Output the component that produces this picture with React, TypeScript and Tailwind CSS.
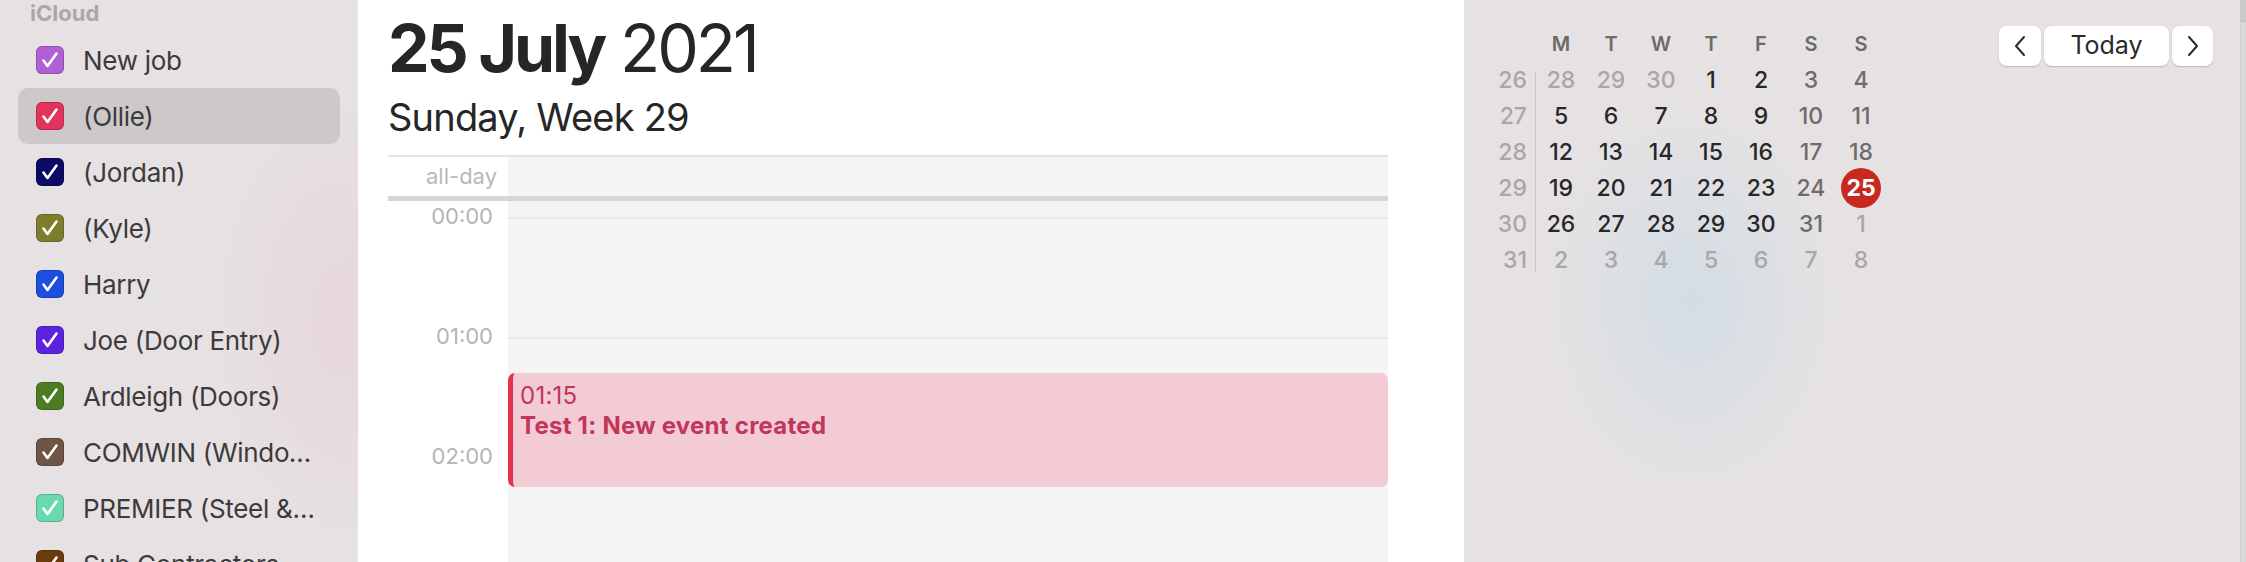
import React from 'react';

type CalendarItem = {
    name: string;
    color: string;
    selected?: boolean;
};

const calendars: CalendarItem[] = [
    { name: 'New job', color: '#b15fd5' },
    { name: '(Ollie)', color: '#e0345a', selected: true },
    { name: '(Jordan)', color: '#0c0b63' },
    { name: '(Kyle)', color: '#7e7c2d' },
    { name: 'Harry', color: '#1c4ee0' },
    { name: 'Joe (Door Entry)', color: '#5b22e0' },
    { name: 'Ardleigh (Doors)', color: '#4b7c22' },
    { name: 'COMWIN (Windows)', color: '#6e5546' },
    { name: 'PREMIER (Steel &Glass)', color: '#6ad9ad' },
    { name: 'Sub Contractors', color: '#6b3a0d' },
];

// kind: 'o' other month, 'd' weekday, 'w' weekend, 't' today
type Day = [number, 'o' | 'd' | 'w' | 't'];

const weeks: { num: number; days: Day[] }[] = [
    { num: 26, days: [[28, 'o'], [29, 'o'], [30, 'o'], [1, 'd'], [2, 'd'], [3, 'w'], [4, 'w']] },
    { num: 27, days: [[5, 'd'], [6, 'd'], [7, 'd'], [8, 'd'], [9, 'd'], [10, 'w'], [11, 'w']] },
    { num: 28, days: [[12, 'd'], [13, 'd'], [14, 'd'], [15, 'd'], [16, 'd'], [17, 'w'], [18, 'w']] },
    { num: 29, days: [[19, 'd'], [20, 'd'], [21, 'd'], [22, 'd'], [23, 'd'], [24, 'w'], [25, 't']] },
    { num: 30, days: [[26, 'd'], [27, 'd'], [28, 'd'], [29, 'd'], [30, 'd'], [31, 'w'], [1, 'o']] },
    { num: 31, days: [[2, 'o'], [3, 'o'], [4, 'o'], [5, 'o'], [6, 'o'], [7, 'o'], [8, 'o']] },
];

const dayColor: Record<Day[1], string> = {
    o: 'text-[#a9a6a7]',
    d: 'text-[#272727]',
    w: 'text-[#6e6b6c]',
    t: 'text-white',
};

const CheckBox: React.FC<{ color: string }> = ({ color }) => (
    <span
        className="w-[28px] h-[28px] rounded-[6px] shrink-0 flex items-center justify-center shadow-[inset_0_0_0_1px_rgba(0,0,0,0.18)]"
        style={{ backgroundColor: color }}
    >
        <svg width="28" height="28" viewBox="0 0 28 28" fill="none">
            <path d="M7.5 14.5 L11.5 20 L20.5 7.5" stroke="white" strokeWidth="2.6" strokeLinecap="round" strokeLinejoin="round" />
        </svg>
    </span>
);

const Sidebar: React.FC = () => (
    <aside className="w-[358px] shrink-0 h-full overflow-hidden bg-[#e6e1e3] bg-[radial-gradient(ellipse_130px_220px_at_345px_320px,#e6d6dd,transparent)]">
        <div className="h-[32px] pl-[30px] pt-[2px] text-[22px] leading-[22px] font-bold text-[#aaa7a8]">iCloud</div>
        <ul>
            {calendars.map((c) => (
                <li
                    key={c.name}
                    className={`mx-[18px] h-[56px] rounded-[10px] flex items-center pl-[18px] pr-[18px] gap-[19px] ${c.selected ? 'bg-[#cdc9ca]' : ''}`}
                >
                    <CheckBox color={c.color} />
                    <span className="truncate text-[26px] tracking-[-0.3px] text-[#3c3a3b]">{c.name}</span>
                </li>
            ))}
        </ul>
    </aside>
);

const hours = ['00:00', '01:00', '02:00'];

const DayView: React.FC = () => (
    <main className="w-[1106px] shrink-0 h-full bg-white pl-[30px] flex flex-col text-[#262626]">
        <h1 className="pt-[15px] text-[66px] leading-[66px] tracking-[-3px]">
            <span className="font-bold">25 July</span> <span className="font-normal">2021</span>
        </h1>
        <h2 className="mt-[17px] text-[38px] leading-[38px] tracking-[-0.8px] font-normal">Sunday, Week 29</h2>

        <div className="mt-[19px] w-[1000px] flex-1 flex flex-col border-t-2 border-[#e4e4e4]">
            <div className="h-[39px] flex">
                <div className="w-[120px] pr-[11px] flex items-center justify-end text-[22px] text-[#b8b8b8]">all-day</div>
                <div className="flex-1 bg-[#f4f4f4]" />
            </div>
            <div className="h-[5px] bg-[#d6d6d6]" />
            <div className="flex-1 flex">
                <div className="w-[120px] pt-[4px]">
                    {hours.map((h) => (
                        <div key={h} className="h-[120px] pr-[15px] text-right text-[22px] leading-[22px] text-[#b5b5b5]">
                            {h}
                        </div>
                    ))}
                </div>
                <div className="flex-1 relative bg-[#f4f4f4] pt-[16px]">
                    {hours.map((h) => (
                        <div key={h} className="h-[120px] border-t-2 border-[#e9e9e9]" />
                    ))}
                    <div className="absolute left-0 right-0 top-[172px] h-[114px] rounded-[7px] border-l-[5px] border-[#e2334f] bg-[#f2c8d3]/95 pl-[7px] pt-[8px] text-[24px] leading-[30px] tracking-[0.25px] text-[#c1365a]">
                        <div>01:15</div>
                        <div className="font-bold">Test 1: New event created</div>
                    </div>
                </div>
            </div>
        </div>
    </main>
);

const Chevron: React.FC<{ dir: 'left' | 'right' }> = ({ dir }) => (
    <svg width="16" height="24" viewBox="0 0 16 24" fill="none">
        <path
            d={dir === 'left' ? 'M12 3 L4 12 L12 21' : 'M4 3 L12 12 L4 21'}
            stroke="#2b2b2b"
            strokeWidth="2"
            strokeLinecap="round"
            strokeLinejoin="round"
        />
    </svg>
);

const MiniCalendar: React.FC = () => (
    <div className="pt-[26px] pl-[23px]">
        <div className="flex h-[36px] items-center">
            <div className="w-[49px]" />
            <div className="grid grid-cols-7 w-[350px] text-center text-[20px] font-semibold text-[#6d6a6b]">
                {['M', 'T', 'W', 'T', 'F', 'S', 'S'].map((d, i) => (
                    <span key={i}>{d}</span>
                ))}
            </div>
        </div>
        <div className="flex">
            <div className="w-[48px] flex flex-col">
                {weeks.map((w) => (
                    <div key={w.num} className="h-[36px] pr-[8px] flex items-center justify-end text-[23px] font-medium text-[#a9a6a7]">
                        {w.num}
                    </div>
                ))}
            </div>
            <div className="w-px bg-[#c9c6c7] mt-[10px] mb-[6px]" />
            <div className="grid grid-cols-7 w-[350px]">
                {weeks.map((w) =>
                    w.days.map(([d, kind], i) => (
                        <div key={`${w.num}-${i}`} className="h-[36px] flex items-center justify-center">
                            {kind === 't' ? (
                                <span className="w-[40px] h-[40px] rounded-full bg-[#c8281e] flex items-center justify-center text-[23px] font-bold text-white">
                                    {d}
                                </span>
                            ) : (
                                <span className={`text-[23px] font-medium ${dayColor[kind]}`}>{d}</span>
                            )}
                        </div>
                    ))
                )}
            </div>
        </div>
    </div>
);

const RightPanel: React.FC = () => (
    <section className="flex-1 h-full flex justify-between items-start pr-[27px] bg-[#e6e2e3] bg-[radial-gradient(ellipse_150px_200px_at_228px_300px,#d2dde4,transparent)]">
        <MiniCalendar />
        <div className="mt-[26px] flex gap-[3px]">
            <button className="w-[42px] h-[40px] rounded-[8px] bg-white shadow-[0_1px_1.5px_rgba(0,0,0,0.18)] flex items-center justify-center">
                <Chevron dir="left" />
            </button>
            <button className="w-[125px] h-[40px] rounded-[8px] bg-white shadow-[0_1px_1.5px_rgba(0,0,0,0.18)] text-[25px] text-[#2a2a2a]">
                Today
            </button>
            <button className="w-[41px] h-[40px] rounded-[8px] bg-white shadow-[0_1px_1.5px_rgba(0,0,0,0.18)] flex items-center justify-center">
                <Chevron dir="right" />
            </button>
        </div>
    </section>
);

export default function App() {
    return (
        <div className="w-[2246px] h-[562px] overflow-hidden flex font-['Inter','Noto_Sans',sans-serif]">
            <Sidebar />
            <DayView />
            <RightPanel />
            <div className="w-[6px] h-full border-l border-[#cfcccd] flex flex-col">
                <div className="h-[22px] bg-[#cbc8c9] border-b border-[#c2bfc0]" />
                <div className="flex-1 bg-[#dcd9da]" />
            </div>
        </div>
    );
}
